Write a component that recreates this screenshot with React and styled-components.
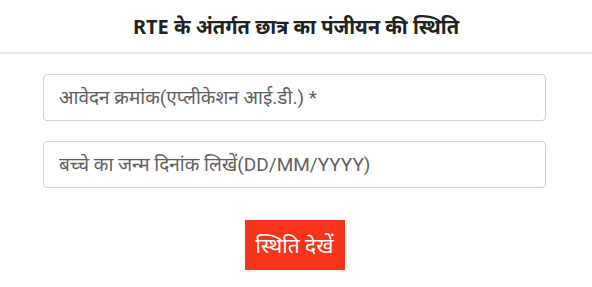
import React from 'react';
import styled, { createGlobalStyle } from 'styled-components';

const GlobalStyle = createGlobalStyle`
    body {
        margin: 0;
        background: #FFFFFF;
        font-family: Roboto, 'Noto Sans', sans-serif;
    }
`;

const Header = styled.div`
    height: 52px;
    display: flex;
    align-items: center;
    justify-content: center;
    border-bottom: 2px solid #E6E6E6;

    h1 {
        margin: 0;
        font-family: 'Noto Sans', sans-serif;
        font-weight: 700;
        font-size: 20px;
        color: #222222;
    }
`;

const Form = styled.form`
    display: flex;
    flex-direction: column;
    gap: 20px;
    margin: 20px 46px 0 43px;
`;

const Field = styled.input`
    box-sizing: border-box;
    height: 47px;
    width: 100%;
    padding: 0 15px;
    border: 1px solid #CFCFCF;
    border-radius: 4px;
    font-family: Roboto, 'Noto Sans', sans-serif;
    font-size: 19px;
    color: #555555;
    outline: none;

    &::placeholder {
        color: #5F5F5F;
    }
`;

const ButtonRow = styled.div`
    display: flex;
    justify-content: center;
    margin-top: 12px;
`;

const SubmitButton = styled.button`
    width: 100px;
    height: 50px;
    border: none;
    background: #F5341B;
    color: #FFFFFF;
    font-family: 'Noto Sans', sans-serif;
    font-size: 21px;
    padding: 0;
    cursor: pointer;
`;

const App = () => {
    return (
        <>
            <GlobalStyle />
            <Header>
                <h1>RTE के अंतर्गत छात्र का पंजीयन की स्थिति</h1>
            </Header>
            <Form onSubmit={(e) => e.preventDefault()}>
                <Field type='text' placeholder='आवेदन क्रमांक(एप्लीकेशन आई.डी.) *' />
                <Field type='text' placeholder='बच्चे का जन्म दिनांक लिखें(DD/MM/YYYY)' />
                <ButtonRow>
                    <SubmitButton type='submit'>स्थिति देखें</SubmitButton>
                </ButtonRow>
            </Form>
        </>
    );
};

export default App;
